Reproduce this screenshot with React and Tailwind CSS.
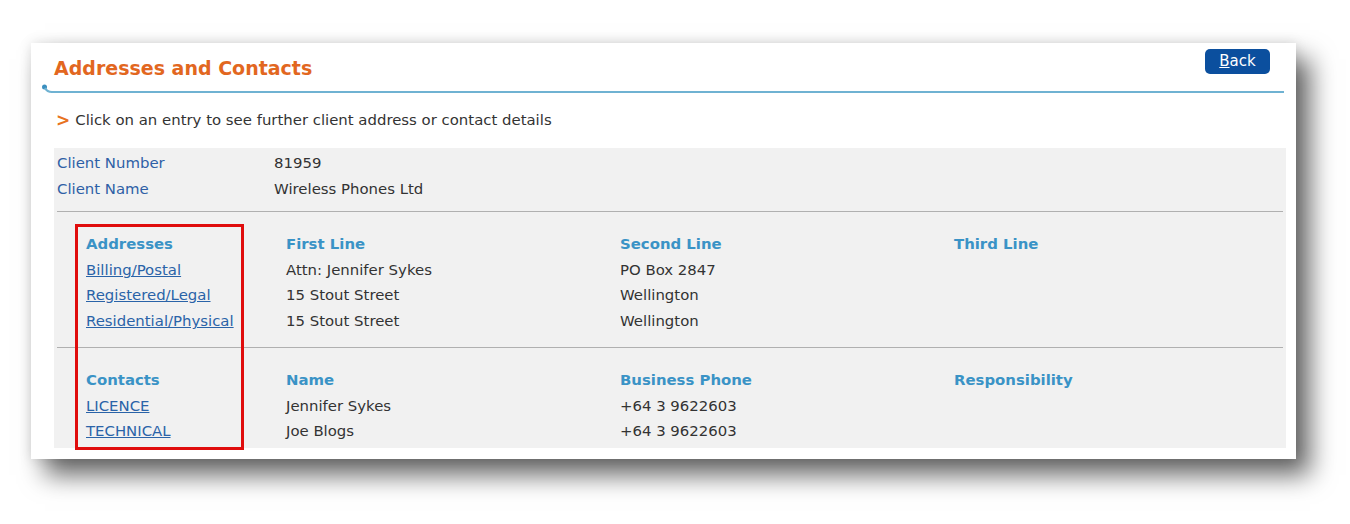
export default function App() {
  const addresses = [
    ["Billing/Postal", "Attn: Jennifer Sykes", "PO Box 2847", ""],
    ["Registered/Legal", "15 Stout Street", "Wellington", ""],
    ["Residential/Physical", "15 Stout Street", "Wellington", ""],
  ];
  const contacts = [
    ["LICENCE", "Jennifer Sykes", "+64 3 9622603", ""],
    ["TECHNICAL", "Joe Blogs", "+64 3 9622603", ""],
  ];

  const Section = ({ heads, rows }) => (
    <div className="grid grid-cols-[200px_334px_334px_1fr] pl-[32px] leading-[25.7px]">
      {heads.map((h) => (
        <div key={h} className="font-bold text-[#3a93c6]">
          {h}
        </div>
      ))}
      {rows.map((r) => (
        <>
          <a key={r[0]} href="#" className="text-[#2a63a8] underline w-fit">
            {r[0]}
          </a>
          <div className="text-[#333]">{r[1]}</div>
          <div className="text-[#333]">{r[2]}</div>
          <div className="text-[#333]">{r[3]}</div>
        </>
      ))}
    </div>
  );

  return (
    <div className="w-[1350px] h-[524px] bg-white font-['DejaVu_Sans',Verdana,sans-serif] text-[14.9px] pt-[43px] pl-[31px]">
      <div className="relative w-[1265px] h-[416px] bg-white shadow-[0_0_12px_rgba(0,0,0,0.12),14px_16px_24px_rgba(0,0,0,0.6)]">
        {/* header */}
        <div className="flex items-start justify-between pl-[23px] pr-[26px] pt-[10px]">
          <h1 className="text-[#e2671f] font-bold text-[19px] mt-[1px]">
            Addresses and Contacts
          </h1>
          <button className="bg-[#0b4f9e] text-white text-[15px] rounded-[5px] w-[65px] h-[25px] mt-[-4px] leading-none">
            <span className="underline">B</span>ack
          </button>
        </div>
        <div className="relative ml-[11px] mr-[12px] mt-[1px] h-[10px]">
          <svg width="12" height="10" className="absolute left-0 top-0">
            <circle cx="2.5" cy="3" r="2.5" fill="#3b8fbf" />
            <path d="M3 4 Q5 8 10 8" stroke="#6fb2d2" strokeWidth="2" fill="none" />
          </svg>
          <div className="absolute left-[9px] right-0 top-[7px] h-[2px] bg-[#6fb2d2]" />
        </div>

        {/* instruction */}
        <div className="flex items-center mt-[14px] pl-[25px] text-[#333]">
          <span className="text-[#e8731f] font-bold mr-[5px] text-[17px]">&gt;</span>
          <span>Click on an entry to see further client address or contact details</span>
        </div>

        {/* details box */}
        <div className="ml-[23px] mr-[10px] mt-[15px] bg-[#f1f1f1] pt-[2px] pb-[2px]">
          <div className="grid grid-cols-[217px_1fr] pl-[3px] leading-[26px]">
            <div className="text-[#2e5fa6]">Client Number</div>
            <div className="text-[#333]">81959</div>
            <div className="text-[#2e5fa6]">Client Name</div>
            <div className="text-[#333]">Wireless Phones Ltd</div>
          </div>
          <div className="mx-[3px] mt-[9px] border-t border-[#b0b0b0]" />
          <div className="pt-[20px] pb-[12px]">
            <Section heads={["Addresses", "First Line", "Second Line", "Third Line"]} rows={addresses} />
          </div>
          <div className="mx-[3px] border-t border-[#b0b0b0]" />
          <div className="pt-[20px] pb-[1px]">
            <Section heads={["Contacts", "Name", "Business Phone", "Responsibility"]} rows={contacts} />
          </div>
        </div>

        {/* highlight annotation */}
        <div className="absolute left-[44px] top-[181px] w-[169px] h-[226px] border-[3px] border-[#e00d0d]" />
      </div>
    </div>
  );
}
